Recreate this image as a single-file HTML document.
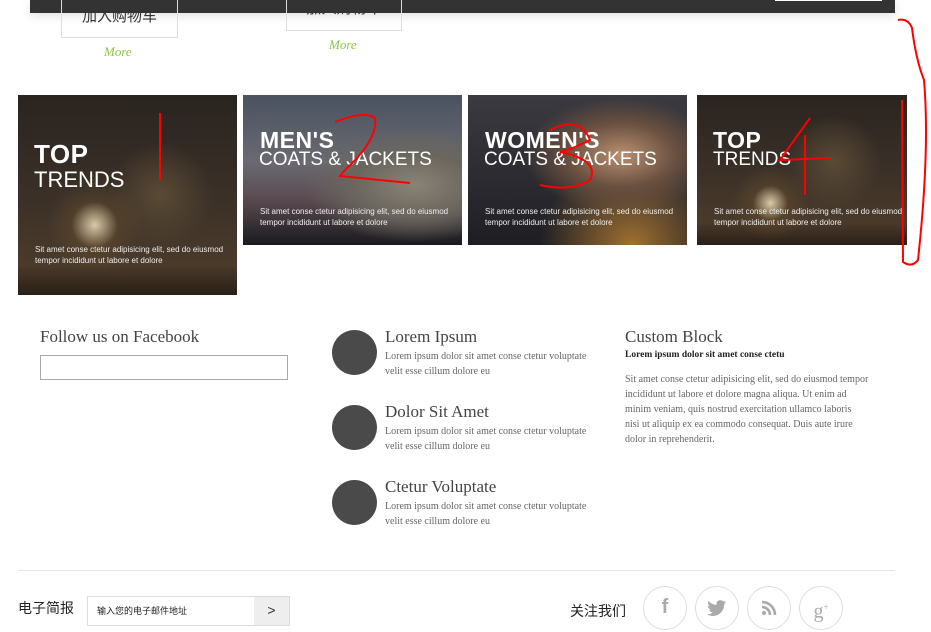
<!DOCTYPE html>
<html><head><meta charset="utf-8"><style>
*{margin:0;padding:0;box-sizing:border-box}
body{width:931px;height:620px;overflow:hidden;background:#fff;position:relative;font-family:"Liberation Serif","Noto Serif CJK SC",serif;color:#444}
.abs{position:absolute}
.bar{left:30px;top:0;width:865px;height:13px;background:#333;box-shadow:0 3px 10px rgba(0,0,0,.12)}
.btn{border:1px solid #ddd;font-family:"Liberation Sans","Noto Sans CJK SC",sans-serif;font-size:15px;color:#333;text-align:center}
.more{font-style:italic;color:#8cc63f;font-size:13px}
.ban{overflow:hidden;color:#fff;font-family:"Liberation Sans",sans-serif}
.ban .t1{position:absolute;font-weight:bold;font-size:23px;letter-spacing:.5px}
.ban .t2{position:absolute;font-size:19px;font-weight:normal}
.ban .s{position:absolute;font-size:8px;line-height:11px;color:#eee}
h3{font-weight:normal;font-size:17px;color:#444;position:absolute}
.circ{width:45px;height:45px;border-radius:50%;background:#4a4a4a}
.p{font-size:10px;line-height:15px;color:#666}
.soc{width:44px;height:44px;border-radius:50%;border:1px solid #ddd;color:#aaa;text-align:center;font-size:20px;line-height:40px;font-family:"Liberation Sans",sans-serif;font-weight:bold}
</style></head><body>
<div class="abs bar"></div>
<div class="abs" style="left:775px;top:0;width:107px;height:1px;background:#fff"></div>
<div class="abs btn" style="left:61px;top:-3px;width:117px;height:41px;line-height:38px">加入购物车</div>
<div class="abs btn" style="left:286px;top:-10px;width:116px;height:41px;line-height:36px">加入购物车</div>
<div class="abs more" style="left:104px;top:44px">More</div>
<div class="abs more" style="left:329px;top:37px">More</div>

<div class="abs ban" style="left:18px;top:95px;width:219px;height:200px;background:radial-gradient(circle at 35% 65%,rgba(255,240,200,.8) 0,rgba(120,90,50,.3) 12%,transparent 25%),radial-gradient(circle at 65% 50%,#5a4a35 0,transparent 30%),linear-gradient(180deg,#2a2420,#3a3028 50%,#4a3a2a 85%,#2a2018)">
<div class="t1" style="left:16px;top:44px;font-size:26px">TOP</div>
<div class="t2" style="left:16px;top:72px;font-size:22px">TRENDS</div>
<div class="s" style="left:17px;top:149px">Sit amet conse ctetur adipisicing elit, sed do eiusmod<br>tempor incididunt ut labore et dolore</div></div>

<div class="abs ban" style="left:243px;top:95px;width:219px;height:150px;background:radial-gradient(ellipse at 78% 60%,#8a8276 0,#6a665e 25%,transparent 45%),linear-gradient(180deg,#4a5260,#6a6a72 45%,#5a4a50 70%,#1a1a1e)">
<div class="t1" style="left:17px;top:32px">MEN'S</div>
<div class="t2" style="left:16px;top:54px">COATS &amp; JACKETS</div>
<div class="s" style="left:17px;top:111px">Sit amet conse ctetur adipisicing elit, sed do eiusmod<br>tempor incididunt ut labore et dolore</div></div>

<div class="abs ban" style="left:468px;top:95px;width:219px;height:150px;background:radial-gradient(ellipse at 70% 40%,#b89070 0,#6a5040 25%,transparent 45%),radial-gradient(ellipse at 75% 100%,#a07030 0,transparent 40%),linear-gradient(180deg,#3a3a40,#2a2a30 60%,#1e1e22)">
<div class="t1" style="left:17px;top:32px">WOMEN'S</div>
<div class="t2" style="left:16px;top:54px">COATS &amp; JACKETS</div>
<div class="s" style="left:17px;top:111px">Sit amet conse ctetur adipisicing elit, sed do eiusmod<br>tempor incididunt ut labore et dolore</div></div>

<div class="abs ban" style="left:697px;top:95px;width:210px;height:150px;background:radial-gradient(circle at 35% 72%,rgba(255,240,200,.8) 0,rgba(120,90,50,.3) 10%,transparent 22%),radial-gradient(circle at 65% 45%,#5a4a35 0,transparent 30%),linear-gradient(180deg,#2a2420,#3a3028 50%,#4a3a2a 85%,#2a2018)">
<div class="t1" style="left:16px;top:32px">TOP</div>
<div class="t2" style="left:16px;top:54px">TRENDS</div>
<div class="s" style="left:17px;top:111px">Sit amet conse ctetur adipisicing elit, sed do eiusmod<br>tempor incididunt ut labore et dolore</div></div>

<svg class="abs" style="left:0;top:0" width="931" height="620" fill="none" stroke="#f00" stroke-width="2">
<path d="M160 113 L160 180"/>
<path d="M335 122 Q365 110 375 118 Q378 140 345 170 L340 176 L410 183"/>
<path d="M550 130 Q580 115 590 140 Q570 150 560 152 Q600 160 590 180 Q570 192 540 185"/>
<path d="M810 118 L780 160 L830 158 M805 135 L805 195"/>
<path d="M898 20 Q908 18 912 28 Q916 60 924 80 Q930 150 918 260 Q912 268 903 262 L902 100"/>
</svg>

<h3 style="left:40px;top:327px">Follow us on Facebook</h3>
<div class="abs" style="left:40px;top:355px;width:248px;height:25px;border:1px solid #a8a8a8"></div>

<div class="abs circ" style="left:332px;top:330px"></div>
<h3 style="left:385px;top:327px">Lorem Ipsum</h3>
<div class="abs p" style="left:385px;top:349px">Lorem ipsum dolor sit amet conse ctetur voluptate<br>velit esse cillum dolore eu</div>
<div class="abs circ" style="left:332px;top:405px"></div>
<h3 style="left:385px;top:402px">Dolor Sit Amet</h3>
<div class="abs p" style="left:385px;top:424px">Lorem ipsum dolor sit amet conse ctetur voluptate<br>velit esse cillum dolore eu</div>
<div class="abs circ" style="left:332px;top:480px"></div>
<h3 style="left:385px;top:477px">Ctetur Voluptate</h3>
<div class="abs p" style="left:385px;top:499px">Lorem ipsum dolor sit amet conse ctetur voluptate<br>velit esse cillum dolore eu</div>

<h3 style="left:625px;top:327px">Custom Block</h3>
<div class="abs" style="left:625px;top:350px;font-size:9.5px;font-weight:bold;color:#222">Lorem ipsum dolor sit amet conse ctetu</div>
<div class="abs p" style="left:625px;top:372px;line-height:15px">Sit amet conse ctetur adipisicing elit, sed do eiusmod tempor<br>incididunt ut labore et dolore magna aliqua. Ut enim ad<br>minim veniam, quis nostrud exercitation ullamco laboris<br>nisi ut aliquip ex ea commodo consequat. Duis aute irure<br>dolor in reprehenderit.</div>

<div class="abs" style="left:18px;top:570px;width:877px;height:1px;background:#e5e5e5"></div>
<div class="abs" style="left:18px;top:598px;font-family:'Liberation Sans','Noto Sans CJK SC',sans-serif;font-size:14px;color:#222">电子简报</div>
<div class="abs" style="left:87px;top:596px;width:203px;height:30px;border:1px solid #ddd;background:#fff"></div>
<div class="abs" style="left:97px;top:604px;font-family:'Noto Sans CJK SC',sans-serif;font-size:9px;color:#222">输入您的电子邮件地址</div>
<div class="abs" style="left:254px;top:597px;width:35px;height:28px;background:#eee;text-align:center;font-family:'Liberation Sans',sans-serif;font-size:14px;line-height:26px;color:#333">&gt;</div>
<div class="abs" style="left:570px;top:601px;font-family:'Liberation Sans','Noto Sans CJK SC',sans-serif;font-size:14px;color:#222">关注我们</div>
<div class="abs soc" style="left:643px;top:586px">f</div>
<div class="abs soc" style="left:695px;top:586px"><svg width="20" height="18" viewBox="0 0 20 18" style="margin-top:12px"><path fill="#aaa" d="M19 3c-.7.3-1.4.5-2.2.6.8-.5 1.4-1.2 1.7-2.1-.7.4-1.6.8-2.4.9C15.400 1.600 14.400 1.100 13.300 1.100c-2.200 0-3.900 1.800-3.900 3.900 0 .3 0 .6.1.9C6.300 5.800 3.400 4.200 1.500 1.900c-.3.600-.5 1.200-.5 2 0 1.400.7 2.600 1.700 3.300-.6 0-1.200-.2-1.800-.5 0 1.900 1.400 3.500 3.100 3.900-.6.200-1.200.2-1.800.1.500 1.600 2 2.700 3.700 2.700-1.700 1.300-3.800 2-6 1.800 1.800 1.100 3.800 1.800 6 1.800 7.200 0 11.200-6 11.200-11.200v-.5c.8-.6 1.400-1.200 1.900-2z"/></svg></div>
<div class="abs soc" style="left:747px;top:586px"><svg width="16" height="16" viewBox="0 0 16 16" style="margin-top:13px"><circle cx="3" cy="13" r="2" fill="#aaa"/><path d="M1 7a8 8 0 0 1 8 8M1 2a13 13 0 0 1 13 13" stroke="#aaa" stroke-width="2.6" fill="none"/></svg></div>
<div class="abs soc" style="left:799px;top:586px;font-family:'Liberation Serif',serif;font-weight:normal">g<sup style="font-size:9px">+</sup></div>
</body></html>
